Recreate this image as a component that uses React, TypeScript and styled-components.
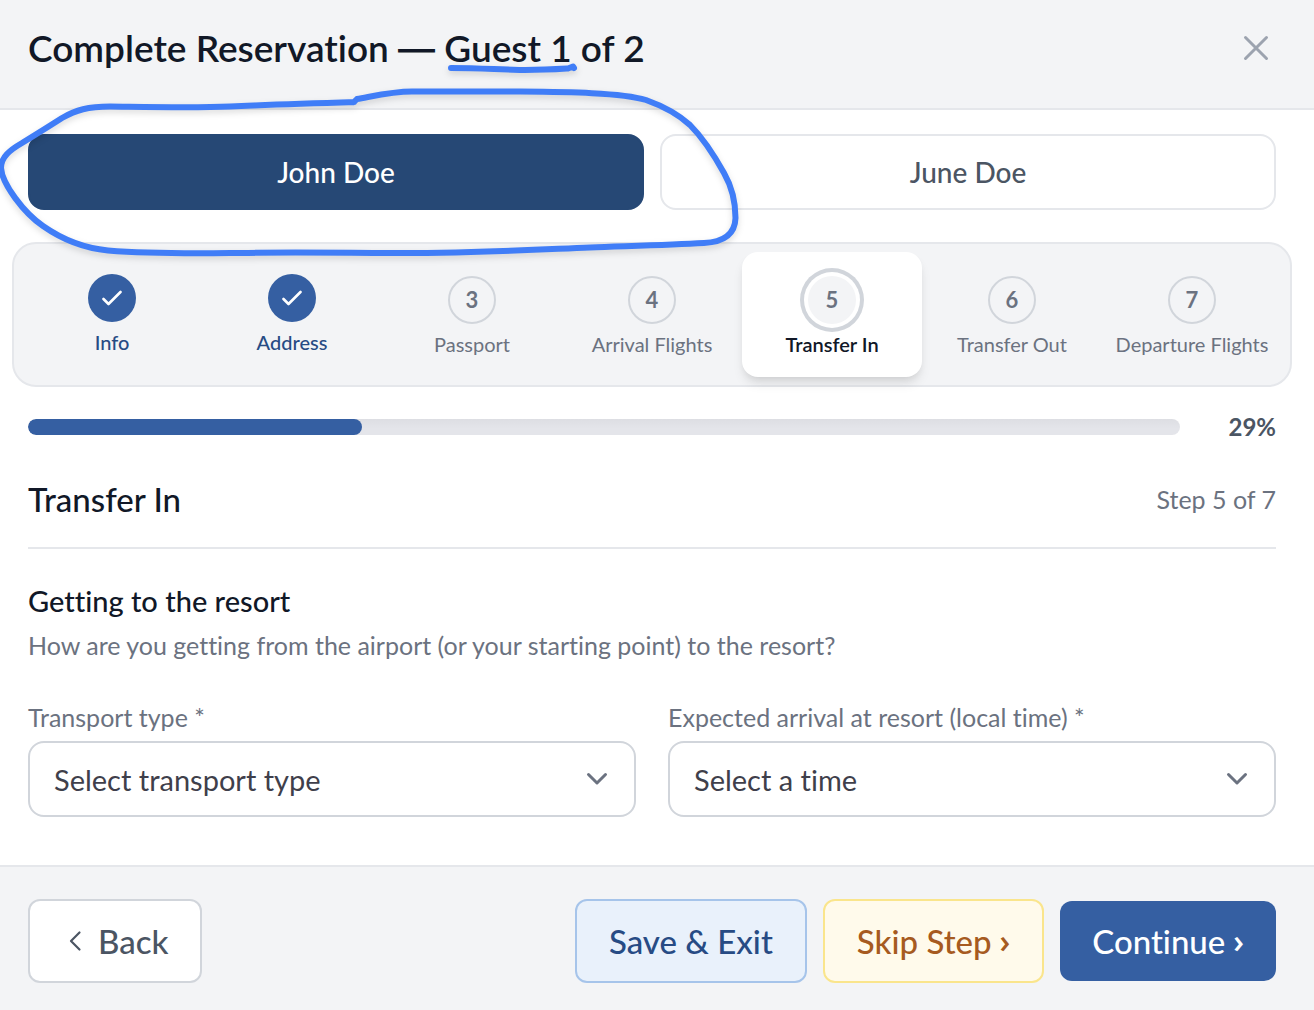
import React, { useState } from "react";
import styled, { createGlobalStyle, css } from "styled-components";

const color = {
  ink: "#111827",
  text: "#4b5563",
  muted: "#6b7280",
  faint: "#9ca3af",
  line: "#e5e7eb",
  border: "#d1d5db",
  surface: "#f3f4f6",
  primary: "#355fa2",
  primaryDark: "#264875",
  primaryText: "#274b84",
  marker: "#407df7",
};

const GlobalStyle = createGlobalStyle`
  *, *::before, *::after { box-sizing: border-box; }
  body {
    margin: 0;
    background: #fff;
    color: ${color.ink};
    font-family: Lato, "Open Sans", sans-serif;
    font-variant-ligatures: none;
  }
  button, select { font: inherit; color: inherit; cursor: pointer; }
  h1, h2, h3, p, ol { margin: 0; padding: 0; }
`;

const Dialog = styled.main`
  position: relative;
  display: flex;
  flex-direction: column;
  min-height: 100vh;
  overflow: hidden;
`;

const Header = styled.header`
  display: flex;
  align-items: flex-start;
  justify-content: space-between;
  padding: 24px 38px 36px 28px;
  background: ${color.surface};
  border-bottom: 2px solid ${color.line};
`;

const Title = styled.h1`
  font-size: 37px;
  line-height: 48px;
  font-weight: 600;
`;

const Dash = styled.span`
  font-family: Inter, sans-serif;
  font-weight: 500;
  line-height: 1;
`;

const CloseButton = styled.button`
  display: flex;
  align-items: center;
  justify-content: center;
  width: 40px;
  height: 48px;
  padding: 0;
  border: 0;
  background: none;
  color: ${color.faint};
`;

const Body = styled.div`
  flex: 1;
  padding: 24px 38px 48px 28px;
`;

const GuestTabs = styled.div`
  display: grid;
  grid-template-columns: 1fr 1fr;
  gap: 16px;
`;

const GuestTab = styled.button<{ $active: boolean }>`
  height: 76px;
  border: 2px solid ${(p) => (p.$active ? color.primaryDark : color.line)};
  border-radius: 16px;
  background: ${(p) => (p.$active ? color.primaryDark : "#fff")};
  color: ${(p) => (p.$active ? "#fff" : color.text)};
  font-size: 28px;
  font-weight: 500;
`;

const StepList = styled.ol`
  display: grid;
  grid-template-columns: repeat(7, 1fr);
  margin: 32px -16px 0;
  padding: 8px;
  list-style: none;
  background: ${color.surface};
  border: 2px solid ${color.line};
  border-radius: 24px;
`;

type StepState = "done" | "current" | "pending";

const StepButton = styled.button<{ $state: StepState }>`
  display: flex;
  flex-direction: column;
  align-items: center;
  gap: 8px;
  width: 100%;
  height: 125px;
  padding: ${(p) => (p.$state === "done" ? 22 : 24)}px 0 0;
  border: 0;
  border-radius: 16px;
  background: none;
  color: ${(p) => (p.$state === "done" ? color.primaryText : color.muted)};
  font-size: 20px;
  line-height: 24px;
  font-weight: ${(p) => (p.$state === "done" ? 500 : 400)};
  white-space: nowrap;
  ${(p) =>
    p.$state === "current" &&
    css`
      background: #fff;
      color: ${color.ink};
      font-weight: 600;
      box-shadow: 0 8px 12px -2px rgba(0, 0, 0, 0.1), 0 4px 8px -4px rgba(0, 0, 0, 0.1);
    `}
`;

const StepMark = styled.span<{ $state: StepState }>`
  display: flex;
  align-items: center;
  justify-content: center;
  width: 48px;
  height: 48px;
  border-radius: 50%;
  background: ${color.surface};
  color: ${color.muted};
  font-size: 22px;
  font-weight: 700;
  ${(p) => p.$state === "pending" && css`border: 2px solid ${color.border};`}
  ${(p) => p.$state === "done" && css`background: ${color.primary}; color: #fff;`}
  ${(p) =>
    p.$state === "current" &&
    css`box-shadow: 0 0 0 4px #fff, 0 0 0 8px ${color.border};`}
`;

const ProgressRow = styled.div`
  display: flex;
  align-items: center;
  gap: 16px;
  margin-top: 24px;
`;

const Track = styled.div`
  flex: 1;
  height: 16px;
  border-radius: 8px;
  overflow: hidden;
  background: linear-gradient(#dddee3, #e4e5ea 60%);
`;

const Fill = styled.div`
  height: 100%;
  border-radius: 8px;
  background: ${color.primary};
`;

const Percent = styled.span`
  width: 80px;
  text-align: right;
  color: ${color.text};
  font-size: 24px;
  line-height: 32px;
  font-weight: 700;
`;

const SectionHead = styled.div`
  display: flex;
  align-items: center;
  justify-content: space-between;
  margin-top: 32px;
  padding-bottom: 24px;
  border-bottom: 2px solid ${color.line};
`;

const SectionTitle = styled.h2`
  font-size: 33px;
  line-height: 48px;
  font-weight: 500;
`;

const Muted = styled.p`
  color: ${color.muted};
  font-size: 25px;
  line-height: 32px;
`;

const Intro = styled.div`
  display: grid;
  gap: 8px;
  margin-top: 32px;
`;

const IntroTitle = styled.h3`
  font-size: 29px;
  line-height: 40px;
  font-weight: 500;
`;

const Fields = styled.div`
  display: grid;
  grid-template-columns: 1fr 1fr;
  gap: 32px;
  margin-top: 40px;
`;

const Field = styled.div`
  display: grid;
  gap: 8px;
`;

const Label = styled.label`
  color: ${color.muted};
  font-size: 25px;
  line-height: 32px;
`;

const SelectBox = styled.div`
  display: grid;
  align-items: center;

  & > * { grid-area: 1 / 1; }
  & > svg {
    justify-self: end;
    margin-right: 26px;
    pointer-events: none;
    color: ${color.muted};
  }
`;

const Select = styled.select`
  appearance: none;
  width: 100%;
  height: 76px;
  padding: 0 64px 0 24px;
  border: 2px solid ${color.border};
  border-radius: 16px;
  background: #fff;
  color: #3f3f4b;
  font-size: 29px;
`;

const Footer = styled.footer`
  display: flex;
  align-items: center;
  justify-content: space-between;
  padding: 32px 38px 27px 28px;
  background: ${color.surface};
  border-top: 2px solid ${color.line};
`;

const Actions = styled.div`
  display: flex;
  align-items: center;
  gap: 16px;
`;

const tones = {
  plain: css`background: #fff; border: 2px solid ${color.border}; color: ${color.text};`,
  save: css`background: #e9f1fb; border: 2px solid #a6c4ea; color: ${color.primaryText};`,
  skip: css`background: #fffaeb; border: 2px solid #fae58c; color: #a65a20;`,
  primary: css`background: ${color.primary}; border: 0; color: #fff;`,
};

const Button = styled.button<{ $tone: keyof typeof tones }>`
  display: flex;
  align-items: center;
  gap: 8px;
  padding: 16px 32px;
  border-radius: 12px;
  font-size: 33px;
  line-height: 48px;
  font-weight: 500;
  white-space: nowrap;
  ${(p) => tones[p.$tone]}
`;

const Arrow = styled.span`
  font-family: "Open Sans", sans-serif;
  font-size: 32px;
  font-weight: 600;
`;

const BackIcon = styled.svg`
  margin: 0 4px;
`;

const Annotation = styled.svg`
  position: absolute;
  top: 0;
  left: 0;
  pointer-events: none;
  fill: none;
  stroke: ${color.marker};
  stroke-width: 6;
  stroke-linecap: round;
  stroke-linejoin: round;
  filter: drop-shadow(0 3px 3px rgba(0, 0, 0, 0.14));
`;

const guests = ["John Doe", "June Doe"];
const steps: { label: string; state: StepState }[] = [
  { label: "Info", state: "done" },
  { label: "Address", state: "done" },
  { label: "Passport", state: "pending" },
  { label: "Arrival Flights", state: "pending" },
  { label: "Transfer In", state: "current" },
  { label: "Transfer Out", state: "pending" },
  { label: "Departure Flights", state: "pending" },
];
const doneCount = steps.filter((s) => s.state === "done").length;
const percent = Math.round((doneCount / steps.length) * 100);

function Check() {
  return (
    <svg width="20" height="16" viewBox="0 0 20 16" fill="none" stroke="currentColor" strokeWidth="2.6" strokeLinecap="round" strokeLinejoin="round" aria-hidden="true">
      <path d="M1.5 9 6.5 14 18.5 2" />
    </svg>
  );
}

function Chevron() {
  return (
    <svg width="24" height="16" viewBox="0 0 24 16" fill="none" stroke="currentColor" strokeWidth="3" strokeLinecap="round" strokeLinejoin="round" aria-hidden="true">
      <path d="M2.5 3.5 11 12 19.5 3.5" />
    </svg>
  );
}

function SelectField({ id, label, options }: { id: string; label: string; options: string[] }) {
  return (
    <Field>
      <Label htmlFor={id}>{label}</Label>
      <SelectBox>
        <Select id={id}>
          {options.map((o) => (
            <option key={o}>{o}</option>
          ))}
        </Select>
        <Chevron />
      </SelectBox>
    </Field>
  );
}

export default function App() {
  const [guest, setGuest] = useState(0);
  return (
    <>
      <GlobalStyle />
      <Dialog>
        <Header>
          <Title>
            Complete Reservation <Dash>—</Dash> Guest 1 of 2
          </Title>
          <CloseButton aria-label="Close">
            <svg width="26" height="26" viewBox="0 0 26 26" fill="none" stroke="currentColor" strokeWidth="3" strokeLinecap="round" aria-hidden="true">
              <path d="M2.5 2.5 23.5 23.5M23.5 2.5 2.5 23.5" />
            </svg>
          </CloseButton>
        </Header>

        <Body>
          <GuestTabs>
            {guests.map((name, i) => (
              <GuestTab key={name} $active={i === guest} aria-pressed={i === guest} onClick={() => setGuest(i)}>
                {name}
              </GuestTab>
            ))}
          </GuestTabs>

          <StepList>
            {steps.map((step, i) => (
              <li key={step.label}>
                <StepButton $state={step.state} aria-current={step.state === "current" ? "step" : undefined}>
                  <StepMark $state={step.state}>{step.state === "done" ? <Check /> : i + 1}</StepMark>
                  {step.label}
                </StepButton>
              </li>
            ))}
          </StepList>

          <ProgressRow>
            <Track role="progressbar" aria-label="Progress" aria-valuenow={percent}>
              <Fill style={{ width: `${percent}%` }} />
            </Track>
            <Percent>{percent}%</Percent>
          </ProgressRow>

          <SectionHead>
            <SectionTitle>Transfer In</SectionTitle>
            <Muted>Step 5 of 7</Muted>
          </SectionHead>

          <Intro>
            <IntroTitle>Getting to the resort</IntroTitle>
            <Muted>How are you getting from the airport (or your starting point) to the resort?</Muted>
          </Intro>

          <Fields>
            <SelectField id="transport" label="Transport type *" options={["Select transport type"]} />
            <SelectField id="arrival" label="Expected arrival at resort (local time) *" options={["Select a time"]} />
          </Fields>
        </Body>

        <Footer>
          <Button $tone="plain">
            <BackIcon width="20" height="22" viewBox="0 0 20 22" fill="none" stroke="currentColor" strokeWidth="2.2" strokeLinecap="round" strokeLinejoin="round" aria-hidden="true">
              <path d="M13.5 2.5 5 11 13.5 19.5" />
            </BackIcon>
            Back
          </Button>
          <Actions>
            <Button $tone="save">Save &amp; Exit</Button>
            <Button $tone="skip">
              Skip Step <Arrow>›</Arrow>
            </Button>
            <Button $tone="primary">
              Continue <Arrow>›</Arrow>
            </Button>
          </Actions>
        </Footer>

        <Annotation width="760" height="270" viewBox="0 0 760 270" aria-hidden="true">
          <path d="M451 68C485 68 500 70 525 70C545 70 560 69 568 68.5L573 66.5L574 68" />
          <path d="M354 102C320 103 280 104 230 106.5C195 108 150 107 110 106.5C88 106.5 76 110 62 118C48 127 35 135 22 143C10 150 1 157 1 168C2 184 24 213 43 226C63 240 83 248 108 250.5C140 253 190 253.5 230 253C300 252 350 253 400 253C480 253 530 250 590 247.5C630 246 670 245 704 243C724 242 735 234 735.5 218C735.5 200 732 187 724 173C714 155 702 137 690 125C678 114 660 105 646 100C620 92 560 92 510 91.5H412C392 91.5 374 96 357 99L354 102" />
        </Annotation>
      </Dialog>
    </>
  );
}
